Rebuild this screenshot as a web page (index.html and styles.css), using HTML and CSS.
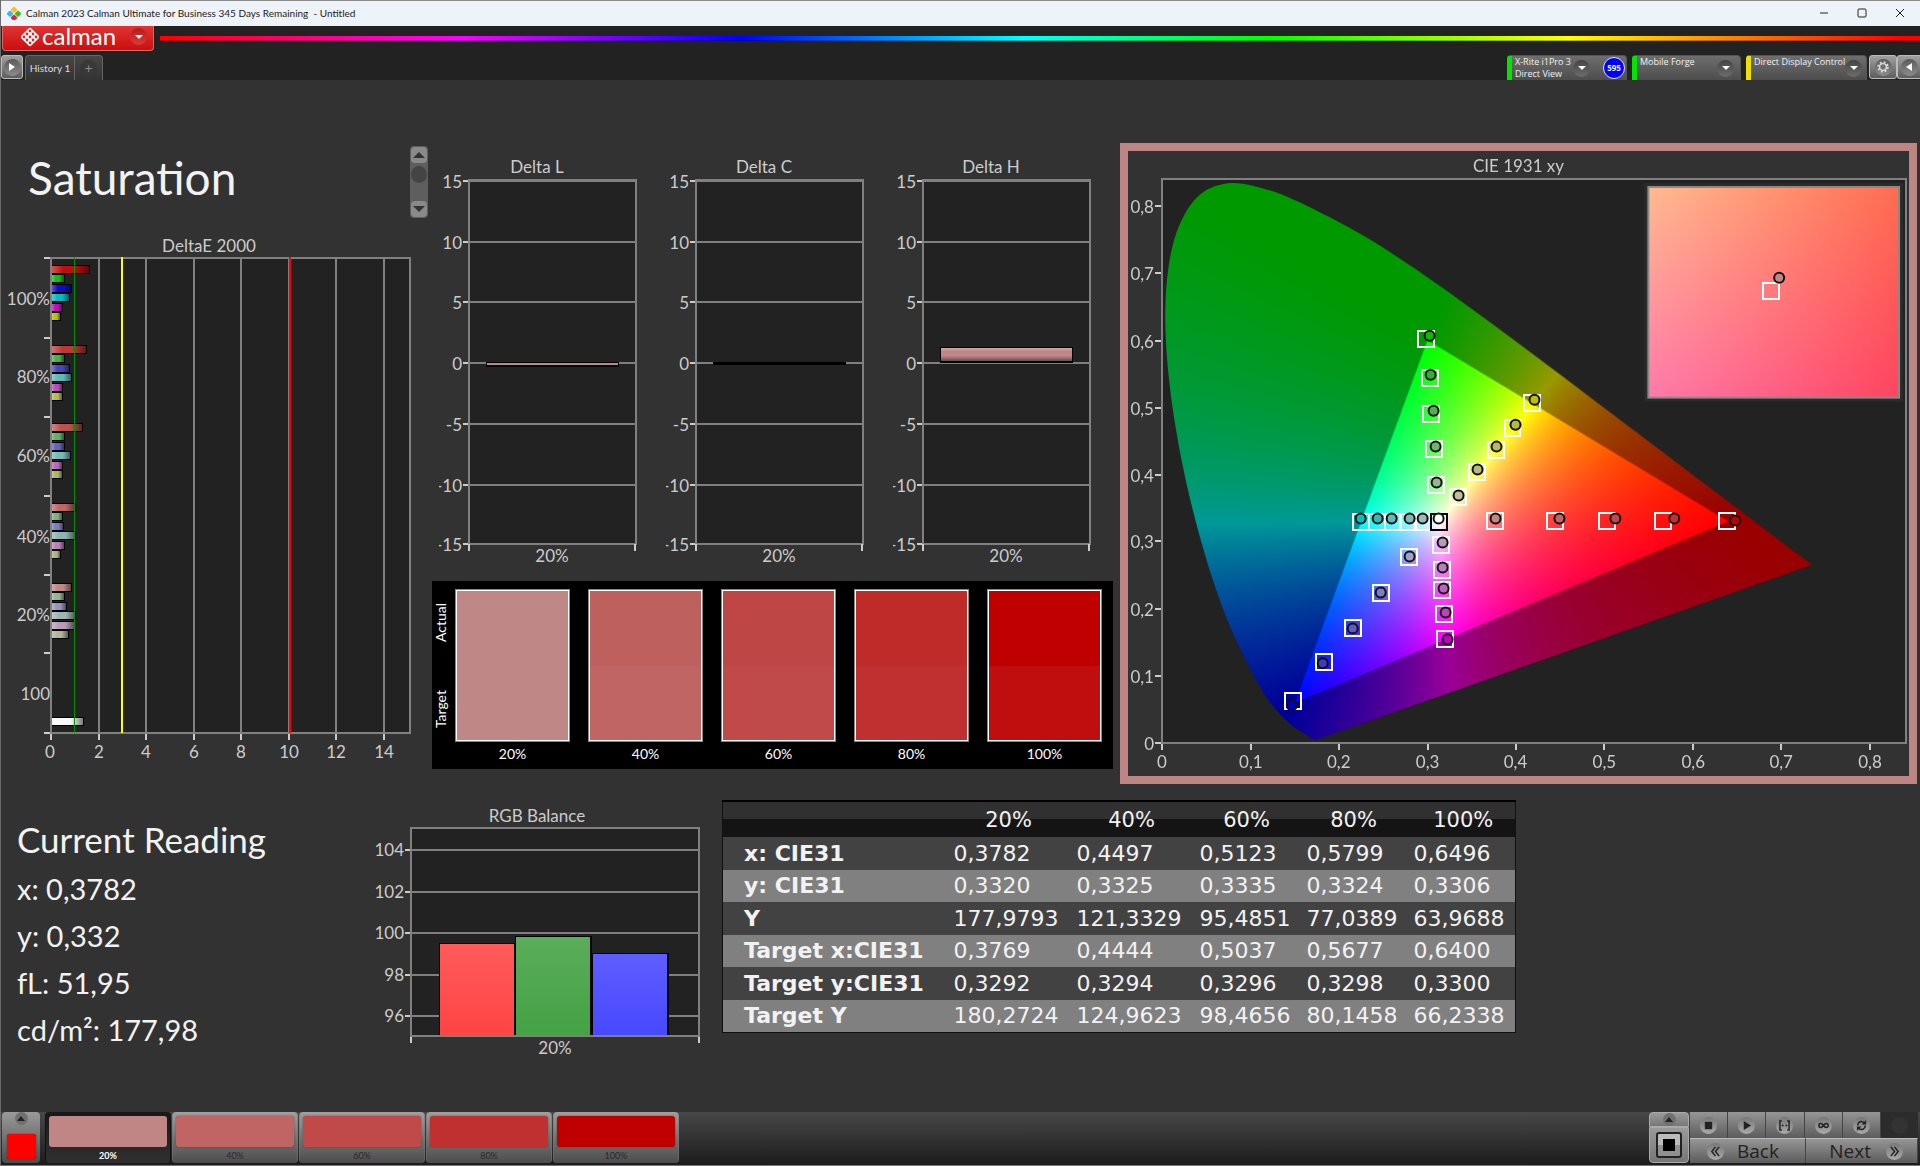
FILE: index.html
```html
<!DOCTYPE html>
<html lang="en">
<head>
<meta charset="utf-8">
<title>Calman 2023</title>
<link rel="stylesheet" href="styles.css">
</head>
<body>
<div class="app">
  <header class="titlebar">
    <svg class="app-icon" viewBox="0 0 14 14" aria-hidden="true">
      <rect x="5" y="1" width="5" height="5" rx="1" transform="rotate(45 7 3)" fill="#ffc20e"/>
      <rect x="1" y="5" width="5" height="5" rx="1" transform="rotate(45 3 7)" fill="#35b8f0"/>
      <rect x="9" y="5" width="5" height="5" rx="1" transform="rotate(45 11 7)" fill="#3fc020"/>
      <rect x="5" y="9" width="5" height="5" rx="1" transform="rotate(45 7 11)" fill="#e8203c"/>
    </svg>
    <span class="window-title">Calman 2023 Calman Ultimate for Business 345 Days Remaining  - Untitled</span>
    <div class="window-buttons">
      <button aria-label="Minimize"><svg viewBox="0 0 10 10"><path d="M1 5H9"/></svg></button>
      <button aria-label="Maximize"><svg viewBox="0 0 10 10"><rect x="1" y="1" width="8" height="8" rx="1"/></svg></button>
      <button aria-label="Close"><svg viewBox="0 0 10 10"><path d="M1 1L9 9M9 1L1 9"/></svg></button>
    </div>
  </header>

  <div class="brandbar">
    <button class="brand">
      <svg class="brand-mark" viewBox="0 0 20 20" aria-hidden="true">
        <rect x="3" y="3" width="14" height="14" rx="2" transform="rotate(45 10 10)" fill="#fff"/>
        <g fill="#d92626">
          <circle cx="10" cy="4" r="1.4"/><circle cx="7" cy="7" r="1.4"/><circle cx="13" cy="7" r="1.4"/>
          <circle cx="4" cy="10" r="1.4"/><circle cx="10" cy="10" r="1.4"/><circle cx="16" cy="10" r="1.4"/>
          <circle cx="7" cy="13" r="1.4"/><circle cx="13" cy="13" r="1.4"/><circle cx="10" cy="16" r="1.4"/>
        </g>
      </svg>
      <span class="brand-name">calman</span>
      <span class="knob knob-red"><svg viewBox="0 0 8 4"><path d="M0 0H8L4 4Z"/></svg></span>
    </button>
    <div class="rainbow"></div>
  </div>

  <nav class="toolbar">
    <button class="bevel play" aria-label="Expand"><span class="knob"><svg class="side" viewBox="0 0 6 8"><path d="M0 0V8L6 4Z"/></svg></span></button>
    <div class="tabs">
      <button class="tab">History 1</button>
      <button class="tab tab-add" aria-label="Add tab"><span class="knob knob-dark">+</span></button>
    </div>
    <div class="devices">
      <div class="device meter">
        <button class="device-name">X-Rite i1Pro 3<br>Direct View</button>
        <span class="knob knob-dim"><svg viewBox="0 0 8 4"><path d="M0 0H8L4 4Z"/></svg></span>
        <span class="badge">595</span>
      </div>
      <div class="device source">
        <button class="device-name">Mobile Forge</button>
        <span class="knob knob-dim"><svg viewBox="0 0 8 4"><path d="M0 0H8L4 4Z"/></svg></span>
      </div>
      <div class="device display">
        <button class="device-name">Direct Display Control</button>
        <span class="knob knob-dim"><svg viewBox="0 0 8 4"><path d="M0 0H8L4 4Z"/></svg></span>
      </div>
      <div class="tools">
        <button class="bevel gear" aria-label="Settings"><span class="knob"><svg class="cog" viewBox="0 0 12 12"><circle cx="6" cy="6" r="3.4" fill="none" stroke="#ddd" stroke-width="1.4"/><circle cx="6" cy="6" r="4.8" fill="none" stroke="#ddd" stroke-width="1.8" stroke-dasharray="1.9 1.87"/></svg></span></button>
        <button class="bevel collapse" aria-label="Collapse"><span class="knob"><svg class="side" viewBox="0 0 6 8"><path d="M6 0V8L0 4Z"/></svg></span></button>
      </div>
    </div>
  </nav>

  <main class="workspace">
    <section class="top-row">
      <div class="errors">
        <div class="heading">
          <h1>Saturation</h1>
          <div class="scroller">
            <button aria-label="Up"><svg viewBox="0 0 12 6"><path d="M0 6H12L6 0Z"/></svg></button>
            <span class="thumb"></span>
            <button aria-label="Down"><svg viewBox="0 0 12 6"><path d="M0 0H12L6 6Z"/></svg></button>
          </div>
        </div>
        <svg class="chart" id="delta-e" viewBox="1 235 429 535"></svg>
      </div>

      <div class="middle">
        <div class="deltas">
          <svg class="chart" id="delta-l" viewBox="0 0 227 418"></svg>
          <svg class="chart" id="delta-c" viewBox="0 0 227 418"></svg>
          <svg class="chart" id="delta-h" viewBox="0 0 227 418"></svg>
        </div>
        <div class="compare">
          <div class="compare-axis"><span>Actual</span><span>Target</span></div>
          <figure><div class="pair p20"></div><figcaption>20%</figcaption></figure>
          <figure><div class="pair p40"></div><figcaption>40%</figcaption></figure>
          <figure><div class="pair p60"></div><figcaption>60%</figcaption></figure>
          <figure><div class="pair p80"></div><figcaption>80%</figcaption></figure>
          <figure><div class="pair p100"></div><figcaption>100%</figcaption></figure>
        </div>
      </div>

      <div class="cie">
        <canvas id="cie-fill" width="782" height="626"></canvas>
        <svg class="chart" id="cie-marks" viewBox="1128 151 782 626"></svg>
      </div>
    </section>

    <section class="bottom-row">
      <div class="reading">
        <h2>Current Reading</h2>
        <p>x: 0,3782</p>
        <p>y: 0,332</p>
        <p>fL: 51,95</p>
        <p>cd/m²: 177,98</p>
      </div>
      <svg class="chart" id="rgb" viewBox="370 800 352 265"></svg>
      <table class="data">
        <colgroup><col class="c-label"><col class="c-wide"><col class="c-wide"><col class="c-mid"><col class="c-mid"><col class="c-last"></colgroup>
        <thead><tr><th></th><th>20%</th><th>40%</th><th>60%</th><th>80%</th><th>100%</th></tr></thead>
        <tbody>
          <tr><th>x: CIE31</th><td>0,3782</td><td>0,4497</td><td>0,5123</td><td>0,5799</td><td>0,6496</td></tr>
          <tr><th>y: CIE31</th><td>0,3320</td><td>0,3325</td><td>0,3335</td><td>0,3324</td><td>0,3306</td></tr>
          <tr><th>Y</th><td>177,9793</td><td>121,3329</td><td>95,4851</td><td>77,0389</td><td>63,9688</td></tr>
          <tr><th>Target x:CIE31</th><td>0,3769</td><td>0,4444</td><td>0,5037</td><td>0,5677</td><td>0,6400</td></tr>
          <tr><th>Target y:CIE31</th><td>0,3292</td><td>0,3294</td><td>0,3296</td><td>0,3298</td><td>0,3300</td></tr>
          <tr><th>Target Y</th><td>180,2724</td><td>124,9623</td><td>98,4656</td><td>80,1458</td><td>66,2338</td></tr>
        </tbody>
      </table>
    </section>
  </main>

  <footer class="footer">
    <button class="current" aria-label="Current pattern"><span class="mini-knob"><svg viewBox="0 0 8 5"><path d="M0 5H8L4 0Z"/></svg></span><span class="current-color"></span></button>
    <div class="steps">
      <button class="step active"><span class="chip p20"></span>20%</button>
      <button class="step"><span class="chip p40"></span>40%</button>
      <button class="step"><span class="chip p60"></span>60%</button>
      <button class="step"><span class="chip p80"></span>80%</button>
      <button class="step"><span class="chip p100"></span>100%</button>
    </div>
    <div class="controls">
      <div class="pattern">
        <button class="pattern-up" aria-label="More"><span class="mini-knob"><svg viewBox="0 0 8 5"><path d="M0 5H8L4 0Z"/></svg></span></button>
        <button class="pattern-main" aria-label="Pattern window"><span class="pattern-frame"><span class="pattern-box"></span></span></button>
      </div>
      <div class="transport">
        <div class="transport-row">
          <button aria-label="Stop"><span class="disc"><svg viewBox="0 0 12 12"><rect x="2" y="2" width="8" height="8"/></svg></span></button>
          <button aria-label="Read"><span class="disc"><svg viewBox="0 0 12 12"><path d="M3 1V11L11 6Z"/></svg></span></button>
          <button aria-label="Read series"><span class="disc"><svg viewBox="0 0 12 12"><path class="line" d="M3 1H1V11H3M9 1H11V11H9M3 6H5M7 6H9"/></svg></span></button>
          <button aria-label="Continuous"><span class="disc"><svg viewBox="0 0 12 12"><path class="line" d="M6 6C4 3 1 3 1 6S4 9 6 6S11 3 11 6S8 9 6 6"/></svg></span></button>
          <button aria-label="Refresh"><span class="disc"><svg viewBox="0 0 12 12"><path class="line" d="M2 6A4 4 0 0 1 9 3M10 6A4 4 0 0 1 3 9"/><path d="M11 0V5H6ZM1 12V7H6Z"/></svg></span></button>
          <span class="idle"><span class="disc"></span></span>
        </div>
        <div class="transport-row nav-row">
          <button class="back"><span class="disc"><svg viewBox="0 0 12 12"><path class="line" d="M6 1L2 6L6 11M10 1L6 6L10 11"/></svg></span>Back</button>
          <button class="next">Next<span class="disc"><svg viewBox="0 0 12 12"><path class="line" d="M2 1L6 6L2 11M6 1L10 6L6 11"/></svg></span></button>
        </div>
      </div>
    </div>
  </footer>
</div>
<script src="charts.js"></script>
</body>
</html>
```
FILE: styles.css
```css
* { box-sizing: border-box; }
body { margin: 0; background: #323232; color: #f2f2f2; font-family: Lato, "Liberation Sans", sans-serif; }
button { border: 0; margin: 0; padding: 0; background: none; color: inherit; font: inherit; }
svg { display: block; }
.app { display: flex; flex-direction: column; min-height: 100vh; border-left: 1px solid #6a6a6a; }

/* Window title */
.titlebar { display: flex; align-items: center; height: 26px; padding: 0 1px 1px 6px; background: #eef3f9; border-top: 1px solid #8a8a8a; color: #1a1a1a; }
.app-icon { width: 14px; height: 14px; }
.window-title { margin-left: 5px; font: 10px/16px Lato, sans-serif; white-space: pre; }
.window-buttons { display: flex; margin-left: auto; }
.window-buttons button { width: 38px; height: 24px; display: grid; place-items: center; }
.window-buttons svg { width: 10px; height: 10px; fill: none; stroke: #222; }

/* Brand strip */
.brandbar { display: flex; height: 28px; padding-left: 1px; background: #222; }
.brand { display: flex; align-items: center; width: 152px; height: 25px; padding: 0 6px 3px 17px; border: 1px solid #d66; border-top: 0; border-radius: 0 0 4px 4px; background: linear-gradient(#e03434, #c90f0f); color: #fff; }
.brand-mark { width: 20px; height: 20px; }
.brand-name { margin: 0 0 2px 2px; font-size: 24px; line-height: 20px; }
.knob { display: grid; place-items: center; flex: none; width: 17px; height: 17px; border-radius: 50%; background: linear-gradient(#5a5a5a, #8c8c8c); }
.knob svg { width: 8px; height: 4px; fill: #fff; }
.knob .side { width: 6px; height: 8px; }
.knob .cog { width: 12px; height: 12px; }
.knob-red { margin-left: auto; background: linear-gradient(#b81a1a, #dd3a3a); }
.knob-dark { background: #383838; color: #8a8a8a; font-size: 14px; line-height: 14px; }
.knob-dim { background: linear-gradient(#444, #6c6c6c); }
.rainbow { flex: 1; height: 5px; margin: 10px 0 0 6px; background: linear-gradient(to right, #f00 0%, #f0f 17%, #00f 33%, #0ff 49%, #0f0 63%, #ff0 80%, #f00 99%); border-bottom: 1px solid #0004; }

/* Tabs and devices */
.toolbar { display: flex; align-items: flex-start; height: 27px; padding-top: 1px; background: #222; border-bottom: 1px solid #333; }
.bevel { display: grid; place-items: center; height: 24px; border: 1px solid #bbb; border-radius: 3px; background: linear-gradient(#a0a0a0, #5e5e5e); }
.play { width: 22px; }
.tabs { display: flex; margin-left: 2px; height: 25px; }
.tab { width: 50px; border: 1px solid #666; border-bottom: 0; border-radius: 4px 0 0 0; background: linear-gradient(#474747, #333); color: #ddd; font-size: 10px; }
.tab-add { display: grid; place-items: center; width: 28px; border-left: 0; border-radius: 0 4px 0 0; }
.devices { display: flex; gap: 5px; margin-left: auto; }
.device { display: flex; align-items: center; height: 25px; padding-right: 6px; border: 1px solid #555; border-bottom: 0; border-left: 5px solid #00e600; border-radius: 4px 4px 0 0; background: linear-gradient(#6e6e6e, #4d4d4d); }
.device .knob { margin-left: auto; }
.device-name { align-self: flex-start; padding-left: 3px; font: 9px/12px "Open Sans", sans-serif; text-align: left; white-space: nowrap; }
.meter { width: 120px; padding-right: 1px; }
.source { width: 109px; }
.display { width: 121px; border-left-color: #f0e000; }
.badge { display: grid; place-items: center; width: 22px; height: 22px; margin-left: 13px; border: 1px solid #dde; border-radius: 50%; background: #00f; font: bold 8px/10px "Open Sans", sans-serif; }
.tools { display: flex; margin-left: -3px; }
.gear { width: 28px; }
.collapse { width: 23px; border-right: 0; border-radius: 3px 0 0 3px; }

/* Workspace */
.workspace { flex: 1; }
.chart { width: 100%; height: auto; font-size: 17px; fill: #ccc; }
.top-row { display: grid; grid-template-columns: 429fr 690fr 800fr; align-items: start; }
.heading { display: flex; justify-content: space-between; height: 154px; padding: 65px 2px 0 27px; }
h1 { margin: 4px 0 0; font-size: 46px; line-height: 56px; font-weight: 400; }
.scroller { display: flex; flex-direction: column; width: 18px; height: 72px; padding: 1px; border-radius: 4px; background: #5e5e5e; }
.scroller button { display: grid; place-items: center; width: 16px; height: 16px; border-radius: 4px; background: #8a8a8a; }
.scroller svg { width: 12px; height: 6px; fill: #333; }
.scroller .thumb { width: 16px; height: 17px; margin: 3px 0 auto; border-radius: 50%; background: #444; }

.deltas { display: flex; padding: 69px 0 0 0; margin: 0 0 0 9px; }
.deltas .chart { flex: 1; min-width: 0; }
.compare { display: flex; gap: 18px; margin: 13px 7px 0 2px; padding: 8px 11px 0 0; height: 188px; background: #000; font-size: 14px; line-height: 18px; text-align: center; color: #fff; }
.compare-axis { display: flex; justify-content: space-between; width: 20px; height: 153px; padding: 14px 0; margin-right: -15px; writing-mode: vertical-rl; }
.compare-axis span { transform: rotate(180deg); }
.compare figure { flex: 1; margin: 0; }
.pair { height: 153px; margin-bottom: 3px; border: 2px solid #fff; outline: 1px solid #888; outline-offset: -1px; }
.p20 { background: linear-gradient(#bf8785 50%, #c08787 50%); }
.p40 { background: linear-gradient(#be605e 50%, #c06464 50%); }
.p60 { background: linear-gradient(#be4745 50%, #c04a4a 50%); }
.p80 { background: linear-gradient(#be2b28 50%, #c03030 50%); }
.p100 { background: linear-gradient(#c00000 50%, #c00d0d 50%); }

.cie { display: grid; margin: 62px 3px 0 0; border: 8px solid #be8585; background: #323232; }
.cie > * { grid-area: 1 / 1; width: 100%; height: auto; }

.bottom-row { display: grid; grid-template-columns: 369fr 352fr 794fr 404fr; align-items: start; padding-top: 15px; }
.reading { padding: 20px 0 0 16px; }
.reading h2 { margin: 0 0 6px; font-size: 35px; line-height: 40px; font-weight: 400; }
.reading p { margin: 0; font-size: 29px; line-height: 47px; }
.data { width: 100%; table-layout: fixed; margin-top: 1px; border-collapse: collapse; border: 1px solid #111; border-top: 2px solid #000; font: 22px/32px "DejaVu Sans", sans-serif; }
.c-label { width: 220px; } .c-wide { width: 123px; } .c-mid { width: 107px; }
.data th, .data td { padding: 0 0 0 11px; text-align: left; white-space: nowrap; }
.data tbody th { padding-left: 21px; }
.data thead tr { height: 36px; background: linear-gradient(#303030 50%, #141414 50%); }
.data thead th { padding: 0 0 0 9px; font-size: 21px; font-weight: 400; text-align: center; }
.data tbody tr { height: 33px; background: #424242; }
.data tbody tr:nth-child(even) { height: 32px; background: #808080; }

/* Footer */
.footer { display: flex; height: 54px; padding: 0 2px 2px 1px; background: linear-gradient(#484848, #1c1c1c); border-bottom: 1px solid #777; }
.current { display: flex; flex-direction: column; align-items: center; width: 38px; height: 51px; border-radius: 4px; background: linear-gradient(#999, #4c4c4c); }
.mini-knob { display: grid; place-items: center; width: 13px; height: 13px; border-radius: 50%; background: #707070; }
.mini-knob svg { width: 8px; height: 5px; fill: #222; }
.current-color { width: 29px; height: 25px; margin-top: 9px; border-radius: 3px; background: #f00; box-shadow: 0 0 1px #300; }
.steps { display: flex; gap: 1px; margin-left: 5px; }
.step { display: flex; flex-direction: column; align-items: center; width: 126px; height: 51px; padding-top: 4px; border-radius: 4px; background: linear-gradient(#a0a0a0, #4c4c4c); color: #2a2a2a; font-size: 9px; line-height: 14px; border: 1px solid #7778; border-width: 0 1px; }
.step.active { background: linear-gradient(#181818, #303030); color: #fff; font-weight: 700; border-color: #111; }
.chip { width: 118px; height: 31px; margin-bottom: 2px; border-radius: 3px; box-shadow: 0 0 2px #2228; }
.step .chip.p20 { background: #c08686; }
.step .chip.p40 { background: #c06464; }
.step .chip.p60 { background: #c04a4a; }
.step .chip.p80 { background: #c03030; }
.step .chip.p100 { background: #c00000; }
.controls { display: flex; gap: 1px; margin-left: auto; }
.pattern { display: flex; flex-direction: column; width: 40px; height: 51px; }
.pattern button { display: grid; place-items: center; border: 1px solid #aaa; background: linear-gradient(#9a9a9a, #777); }
.pattern-up { height: 15px; border-radius: 4px 4px 0 0; }
.pattern-main { flex: 1; border-radius: 0 0 4px 4px; }
.pattern-frame { display: grid; place-items: center; width: 26px; height: 26px; border: 2px solid #222; border-radius: 3px; background: linear-gradient(#bbb 50%, #909090 50%); }
.pattern-box { width: 12px; height: 12px; background: #000; }
.transport { width: 228px; }
.transport-row { display: flex; height: 26px; color: #222; }
.transport-row > * { display: flex; flex: 1; align-items: center; justify-content: center; border-right: 1px solid #444; background: linear-gradient(#969696, #5c5c5c); }
.transport-row .idle { background: #2c2c2c; border: 0; }
.nav-row { height: 25px; font: 19px/22px "Open Sans", sans-serif; }
.nav-row > * { gap: 13px; border-top: 1px solid #bbb; }
.nav-row .back { justify-content: flex-start; padding-left: 17px; }
.nav-row .next { justify-content: flex-end; padding-right: 14px; gap: 15px; }
.disc { display: grid; place-items: center; width: 17px; height: 17px; border-radius: 50%; background: linear-gradient(#777, #aaa); }
.idle .disc { background: #333; }
.disc svg { width: 11px; height: 11px; fill: #222; }
.disc .line { fill: none; stroke: #222; stroke-width: 1.6; }

/* Chart parts */
.plot { fill: #222; }
.grid { stroke: #808080; stroke-width: 2; fill: none; shape-rendering: crispEdges; }
.tick { stroke: #ccc; stroke-width: 2; fill: none; shape-rendering: crispEdges; }
.end { text-anchor: end; }
.mid { text-anchor: middle; }
.shade, .limit { shape-rendering: crispEdges; }
.target { fill: none; stroke: #fff; stroke-width: 2; shape-rendering: crispEdges; }
.white-target { stroke: #000; }
.measured { stroke: #111; stroke-width: 2; }
```
FILE: charts.js
```js
const NS = 'http://www.w3.org/2000/svg';
function add(parent, tag, attrs, text) {
  const el = document.createElementNS(NS, tag);
  for (const k in attrs) el.setAttribute(k, attrs[k]);
  if (text !== undefined) el.textContent = text;
  parent.appendChild(el);
  return el;
}
const rect = (p, cls, x, y, w, h, fill) =>
  add(p, 'rect', Object.assign({ class: cls, x, y, width: w, height: h }, fill ? { fill } : {}));
const path = (p, cls, d) => add(p, 'path', { class: cls, d });
const label = (p, cls, x, y, t) => add(p, 'text', { class: cls, x, y }, t);
function gradient(p, id, vertical, stops) {
  const g = add(add(p, 'defs', {}), 'linearGradient', { id, x1: 0, y1: 0, x2: vertical ? 0 : 1, y2: vertical ? 1 : 0 });
  stops.forEach(([offset, color, opacity]) => add(g, 'stop', { offset, 'stop-color': color, 'stop-opacity': opacity }));
}
const GLOSS = [[0, '#fff', .3], [.3, '#fff', 0], [.6, '#000', 0], [1, '#000', .5]];

// DeltaE 2000
(function () {
  const s = document.getElementById('delta-e');
  gradient(s, 'gloss-h', false, GLOSS);
  label(s, 'mid', 209, 252, 'DeltaE 2000');
  rect(s, 'plot', 51, 258, 359, 475);
  [2, 4, 6, 8, 10, 12, 14].forEach(v => {
    const x = Math.round(51 + v * 23.75);
    path(s, 'grid', `M${x} 258V733`);
    path(s, 'tick', `M${x} 734V740`);
    label(s, 'mid', x, 758, v);
  });
  path(s, 'tick', 'M51 734V740');
  label(s, 'mid', 50, 758, 0);
  [258, 338, 417, 496, 575, 653, 733].forEach(y => path(s, 'tick', `M44 ${y}H50`));
  [['100%', 305], ['80%', 383], ['60%', 462], ['40%', 543], ['20%', 621], ['100', 700]]
    .forEach(([t, y]) => label(s, 'end', 50, y, t));
  const groups = [
    [265, [[90, '#c00d0d'], [65, '#14be14'], [72, '#0d0dc0'], [70, '#0db9be'], [63, '#be0fbe'], [61, '#bebe0f']]],
    [345, [[87, '#c03636'], [65, '#46b446'], [70, '#4646b9'], [72, '#5fb9b9'], [63, '#be4bbe'], [63, '#b9b950']]],
    [423, [[83, '#c04f4f'], [65, '#5fb45f'], [65, '#6464b9'], [71, '#78b9b9'], [63, '#b969b9'], [63, '#b4b464']]],
    [503, [[76, '#c06464'], [63, '#78b47d'], [64, '#7d7db9'], [76, '#8cb4b4'], [65, '#b982b9'], [61, '#b4b47d']]],
    [583, [[72, '#c08787'], [65, '#96b496'], [67, '#9696b9'], [76, '#a0b4b4'], [75, '#b99bb9'], [69, '#b4b496']]],
    [717, [[84, '#f8f8f8']]]
  ];
  groups.forEach(([top, bars]) => bars.forEach(([end, color], i) => {
    const y = top + Math.round(i * 9.4);
    rect(s, 'shade', 51, y, end - 51, 9, '#000');
    rect(s, 'shade', 52, y + 1, end - 53, 7, color);
    rect(s, 'shade', 52, y + 1, end - 53, 7, 'url(#gloss-h)');
  }));
  path(s, 'grid', 'M51 258H410V733H51Z');
  rect(s, 'limit', 74, 257, 1, 476, '#009000');
  rect(s, 'limit', 121, 257, 2, 476, '#ff0');
  rect(s, 'limit', 289, 257, 2, 476, '#f00');
})();

// Delta L / C / H
[['delta-l', 'Delta L', 212, 5], ['delta-c', 'Delta C', 212, 3], ['delta-h', 'Delta H', 197, 16]].forEach(([id, title, top, h]) => {
  const s = document.getElementById(id);
  gradient(s, 'gloss-' + id, true, [[0, '#fff', .3], [.25, '#fff', 0], [.6, '#000', 0], [1, '#000', .45]]);
  label(s, 'mid', 98, 23, title);
  rect(s, 'plot', 30, 31, 166, 363);
  [[15, 31], [10, 92], [5, 152], [0, 213], [-5, 274], [-10, 335], [-15, 394]].forEach(([v, y]) => {
    path(s, 'grid', `M30 ${y}H196`);
    path(s, 'tick', `M24 ${y}H29`);
    label(s, 'end', 23, y + 7, v);
  });
  path(s, 'grid', 'M29 30H197V394H30V30');
  path(s, 'tick', 'M30 394V401M196 394V401');
  rect(s, 'shade', 47, top, 133, h, '#000');
  if (h > 3) {
    rect(s, 'shade', 48, top + 1, 131, h - 3, '#c08787');
    if (h > 5) rect(s, 'shade', 48, top + 1, 131, h - 3, `url(#gloss-${id})`);
  }
  label(s, 'mid', 113, 412, '20%');
});

// RGB Balance
(function () {
  const s = document.getElementById('rgb');
  gradient(s, 'gloss-rgb', true, [[0, '#fff', .12], [1, '#fff', 0]]);
  label(s, 'mid', 537, 823, 'RGB Balance');
  rect(s, 'plot', 411, 829, 288, 208);
  [[104, 851], [102, 893], [100, 934], [98, 976], [96, 1017]].forEach(([v, y]) => {
    path(s, 'grid', `M411 ${y}H699`);
    path(s, 'tick', `M405 ${y}H410`);
    label(s, 'end', 404, y + 6, v);
  });
  [[439, 944, '#ff4444'], [515, 937, '#44a244'], [592, 954, '#4848ff']].forEach(([x, y, c]) => {
    rect(s, 'shade', x, y, 77, 1038 - y, '#000');
    rect(s, 'shade', x + 1, y + 1, 74, 1036 - y, c);
    rect(s, 'shade', x + 1, y + 1, 74, 1036 - y, 'url(#gloss-rgb)');
  });
  path(s, 'grid', 'M411 829H699V1037H411Z');
  path(s, 'tick', 'M411 1038V1044M699 1038V1044');
  label(s, 'mid', 555, 1055, '20%');
})();

// CIE 1931 chromaticity fill
const PX = x => 1162 - 1128 + x * 886;
const PY = y => 744 - 151 - y * 672.5;
(function () {
  const c = document.getElementById('cie-fill');
  const g = c.getContext('2d');
  g.fillStyle = '#222';
  g.fillRect(34, 28, 745, 565);
  function layer(k) {
    const o = document.createElement('canvas');
    o.width = c.width; o.height = c.height;
    const og = o.getContext('2d');
    const img = og.createImageData(o.width, o.height);
    for (let j = 0; j < o.height; j++) for (let i = 0; i < o.width; i++) {
      const x = (i - PX(0)) / 886, y = (PY(0) - j) / 672.5, z = 1 - x - y;
      const rgb = [3.2406 * x - 1.5372 * y - .4986 * z, -.9689 * x + 1.8758 * y + .0415 * z, .0557 * x - .204 * y + 1.057 * z]
        .map(v => Math.max(0, v));
      const m = Math.max(...rgb) || 1, q = (j * o.width + i) * 4;
      for (let n = 0; n < 3; n++) img.data[q + n] = 255 * k * rgb[n] / m;
      img.data[q + 3] = 255;
    }
    og.putImageData(img, 0, 0);
    return o;
  }
  const L = [[.1741,.005],[.1714,.0051],[.1644,.0109],[.1566,.0177],[.144,.0297],[.1241,.0578],[.1096,.0868],[.0913,.1327],
    [.0687,.2007],[.0454,.295],[.0235,.4127],[.0082,.5384],[.0039,.6548],[.0139,.7502],[.0389,.812],[.0743,.8338],[.1142,.8262],
    [.1547,.8059],[.2296,.7543],[.3016,.6923],[.3731,.6245],[.4441,.5547],[.5125,.4866],[.5752,.4242],[.627,.3725],[.6658,.334],
    [.6915,.3083],[.719,.2809],[.7347,.2653]].map(([x, y]) => [PX(x), PY(y)]);
  g.save();
  g.beginPath();
  g.moveTo(...L[0]);
  for (let i = 0; i < L.length - 1; i++) {
    const a = L[i - 1] || L[i], b = L[i], d = L[i + 1], e = L[i + 2] || d;
    g.bezierCurveTo(b[0] + (d[0] - a[0]) / 6, b[1] + (d[1] - a[1]) / 6, d[0] - (e[0] - b[0]) / 6, d[1] - (e[1] - b[1]) / 6, d[0], d[1]);
  }
  g.closePath();
  g.clip();
  g.drawImage(layer(.6), 0, 0);
  g.restore();
  g.save();
  g.beginPath();
  g.moveTo(PX(.64), PY(.33)); g.lineTo(PX(.3), PY(.6)); g.lineTo(PX(.15), PY(.06));
  g.closePath();
  g.clip();
  g.drawImage(layer(1), 0, 0);
  g.restore();

  // Magnified view, blended from its four corners
  g.fillStyle = '#2b2b2b';
  g.fillRect(517, 32, 259, 219);
  g.fillStyle = '#8a8a8a';
  g.fillRect(520, 35, 253, 213);
  const w = 249, h = 209, inset = g.createImageData(w, h);
  const tl = [255, 186, 144], tr = [255, 108, 80], bl = [255, 122, 170], br = [255, 68, 96];
  for (let j = 0; j < h; j++) for (let i = 0; i < w; i++) {
    const u = i / w, v = j / h, q = (j * w + i) * 4;
    for (let n = 0; n < 3; n++)
      inset.data[q + n] = (tl[n] * (1 - u) + tr[n] * u) * (1 - v) + (bl[n] * (1 - u) + br[n] * u) * v;
    inset.data[q + 3] = 255;
  }
  g.putImageData(inset, 522, 37);
})();

// CIE axes and markers
(function () {
  const s = document.getElementById('cie-marks');
  label(s, 'mid', 1519, 172, 'CIE 1931 xy');
  path(s, 'grid', 'M1162 179H1907V744H1162Z');
  for (let i = 0; i <= 8; i++) {
    const x = Math.round(1162 + i * 88.6), y = Math.round(744 - i * 67.25), t = i ? '0,' + i : '0';
    path(s, 'tick', `M${x} 745V751M1155 ${y}H1161`);
    label(s, 'mid', x, 769, t);
    label(s, 'end', 1154, y + 7, t);
  }
  const sets = [
    [['#00c000', 1426, 339, 1430, 336], ['#30b030', 1430, 378, 1431, 375], ['#50b050', 1431, 414, 1434, 411], ['#70b470', 1434, 449, 1436, 447], ['#96b496', 1436, 485, 1437, 483]],
    [['#c0c000', 1533, 403, 1535, 400], ['#b9b940', 1513, 428, 1516, 425], ['#b9b95f', 1496, 450, 1497, 447], ['#b9b97d', 1477, 472, 1478, 470], ['#bebea0', 1458, 497, 1459, 496]],
    [['#c08787', 1495, 521, 1496, 519], ['#c06464', 1556, 521, 1560, 519], ['#c04a4a', 1608, 521, 1616, 519], ['#c03030', 1664, 521, 1675, 519], ['#c00000', 1728, 521, 1736, 521]],
    [['#00c0c0', 1361, 522, 1361, 519], ['#3cb4b4', 1377, 522, 1378, 519], ['#64b9b9', 1393, 522, 1392, 519], ['#82b9b9', 1408, 522, 1410, 519], ['#a0b9b9', 1423, 522, 1423, 519]],
    [['#a0a0c8', 1409, 558, 1410, 557], ['#7d7dc0', 1381, 594, 1381, 593], ['#5f5fb9', 1353, 629, 1353, 629], ['#3c3cb9', 1324, 663, 1323, 664], ['#0000c0', 1293, 702, 1292, 706]],
    [['#b99bb9', 1441, 546, 1443, 543], ['#b97db9', 1442, 571, 1443, 568], ['#b964b9', 1442, 591, 1444, 589], ['#b946b9', 1444, 615, 1446, 613], ['#c000c0', 1445, 640, 1448, 640]],
    [['#ffffff', 1439, 522, 1439, 519]],
    [['#c08787', 1772, 291, 1780, 278]]
  ];
  const all = sets.flat();
  all.forEach(([c, x, y]) => rect(s, c === '#ffffff' ? 'target white-target' : 'target', x - 8, y - 8, 16, 16));
  all.forEach(([c, , , x, y]) => add(s, 'circle', { class: 'measured', cx: x, cy: y, r: 5, fill: c }));
})();
```
